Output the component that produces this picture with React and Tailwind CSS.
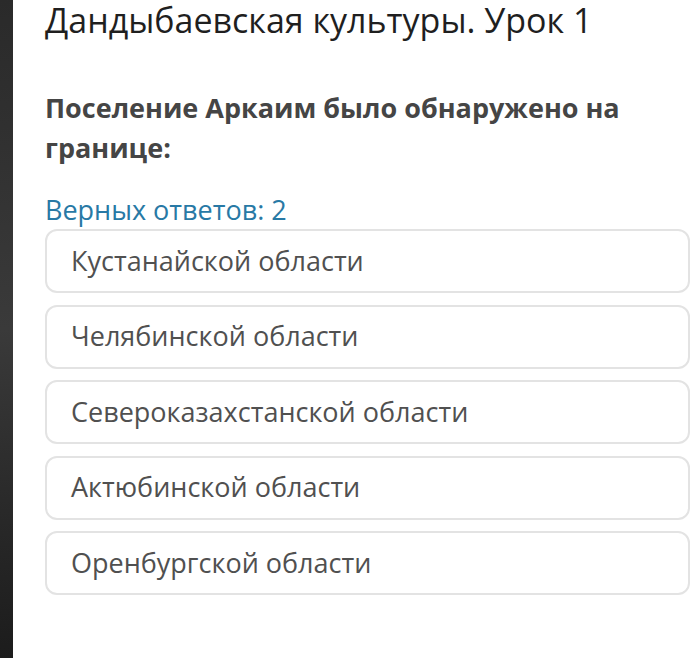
export default function App() {
  const options = [
    'Кустанайской области',
    'Челябинской области',
    'Североказахстанской области',
    'Актюбинской области',
    'Оренбургской области',
  ];

  return (
    <div className="flex h-[658px] w-[697px] overflow-hidden bg-white font-['Open_Sans',sans-serif]">
      <div className="w-[13px] shrink-0 bg-gradient-to-b from-[#2a2a2a] via-[#3a3a3a] to-[#1c1c1c]" />
      <div className="flex-1 pl-[32px] pr-[7px]">
        <div className="-mt-[43px] text-[34px] leading-[42px] text-[#1f1f1f]">
          <div>Андроновская культура</div>
          <div>Дандыбаевская культуры. Урок 1</div>
        </div>
        <p className="mt-[47px] text-[27px] font-bold leading-[40px] text-[#454545]">
          Поселение Аркаим было обнаружено на границе:
        </p>
        <div className="mt-[25px] text-[27px] leading-[34px] text-[#2879a5]">Верных ответов: 2</div>
        <div className="mt-[2px] flex flex-col gap-[11.5px]">
          {options.map((o) => (
            <div
              key={o}
              className="flex h-[64px] items-center rounded-[12px] border-2 border-[#e3e3e3] px-[24px] text-[27px] text-[#505050]"
            >
              {o}
            </div>
          ))}
        </div>
      </div>
    </div>
  );
}
